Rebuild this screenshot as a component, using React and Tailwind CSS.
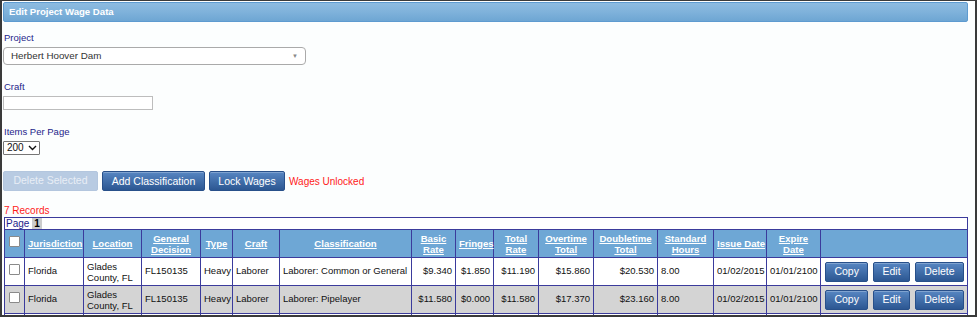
import React from "react";

const columns = [
  { label: ["Jurisdiction"], w: 59 },
  { label: ["Location"], w: 58 },
  { label: ["General", "Decision"], w: 59 },
  { label: ["Type"], w: 32 },
  { label: ["Craft"], w: 47 },
  { label: ["Classification"], w: 132 },
  { label: ["Basic", "Rate"], w: 44 },
  { label: ["Fringes"], w: 38 },
  { label: ["Total", "Rate"], w: 45 },
  { label: ["Overtime", "Total"], w: 55 },
  { label: ["Doubletime", "Total"], w: 64 },
  { label: ["Standard", "Hours"], w: 56 },
  { label: ["Issue Date"], w: 53 },
  { label: ["Expire", "Date"], w: 54 },
];

const rows = [
  {
    jur: "Florida",
    loc: ["Glades", "County, FL"],
    dec: "FL150135",
    type: "Heavy",
    craft: "Laborer",
    cls: "Laborer: Common or General",
    basic: "$9.340",
    fringe: "$1.850",
    total: "$11.190",
    ot: "$15.860",
    dt: "$20.530",
    hours: "8.00",
    issue: "01/02/2015",
    expire: "01/01/2100",
  },
  {
    jur: "Florida",
    loc: ["Glades", "County, FL"],
    dec: "FL150135",
    type: "Heavy",
    craft: "Laborer",
    cls: "Laborer: Pipelayer",
    basic: "$11.580",
    fringe: "$0.000",
    total: "$11.580",
    ot: "$17.370",
    dt: "$23.160",
    hours: "8.00",
    issue: "01/02/2015",
    expire: "01/01/2100",
  },
  {
    jur: "Florida",
    loc: ["Glades", "County, FL"],
    dec: "FL150135",
    type: "Heavy",
    craft: "Laborer",
    cls: "Laborer: Mason Tender",
    basic: "$10.250",
    fringe: "$0.000",
    total: "$10.250",
    ot: "$15.375",
    dt: "$20.500",
    hours: "8.00",
    issue: "01/02/2015",
    expire: "01/01/2100",
  },
];

const btn =
  "h-[20px] rounded-[2px] border border-[#28508a] bg-gradient-to-b from-[#5786c2] to-[#2c5792] text-white text-[10.5px] leading-none shadow-[inset_0_1px_0_rgba(255,255,255,0.25)]";

const Checkbox = () => (
  <span className="inline-block w-[11px] h-[11px] border border-[#8a8a8a] bg-white rounded-[1px]" />
);

const cell = "border border-[#3b3b9c] px-[3px] align-middle whitespace-nowrap";

export default function App() {
  return (
    <div
      className="w-[977px] h-[317px] overflow-hidden bg-[#fcfefe] border-l-2 border-r-2 border-t border-b-2 border-[#3a3a3a] pl-px pr-[7px] text-[9.5px] text-[#111]"
      style={{ fontFamily: '"Liberation Sans", Arial, sans-serif' }}
    >
      {/* Header bar */}
      <div className="mt-px h-[20px] rounded-[2px] border border-[#5e9bd0] bg-gradient-to-b from-[#8dbbe0] via-[#7fb2db] to-[#6ea6d3] flex items-center pl-[5px]">
        <span className="text-white font-bold text-[9.6px]">Edit Project Wage Data</span>
      </div>

      {/* Project */}
      <div className="mt-[10px] h-[12px] leading-[12px] pl-px text-[#1d1d8a]">Project</div>
      <div className="mt-[3px] w-[303px] h-[18px] rounded-[4px] border border-[#aaaaaa] bg-white flex items-center justify-between pl-[7px] pr-[7px] text-[#333]">
        <span className="text-[9.8px]">Herbert Hoover Dam</span>
        <span className="text-[6px] text-[#888]">▼</span>
      </div>

      {/* Craft */}
      <div className="mt-[16px] h-[12px] leading-[12px] pl-px text-[#1d1d8a]">Craft</div>
      <div className="mt-[3px] w-[150px] h-[14px] border border-[#bdbdbd] bg-white" />

      {/* Items per page */}
      <div className="mt-[16px] h-[12px] leading-[12px] pl-px text-[#1d1d8a]">Items Per Page</div>
      <div className="mt-[3px] w-[37px] h-[14px] border border-[#767676] rounded-[1px] bg-white flex items-center justify-between pl-[3px] pr-[2px]">
        <span className="text-[10px] leading-none">200</span>
        <svg width="9" height="6" viewBox="0 0 9 6">
          <path d="M1 1 L4.5 4.5 L8 1" fill="none" stroke="#111" strokeWidth="1.4" />
        </svg>
      </div>

      {/* Actions */}
      <div className="mt-[16px] flex items-center h-[20px]">
        <button className="w-[95px] h-[20px] rounded-[2px] border border-[#b3c6de] bg-[#b8cbe2] text-[#e8eef6] text-[10.5px]">
          Delete Selected
        </button>
        <button className={`${btn} ml-[4px] w-[103px]`}>Add Classification</button>
        <button className={`${btn} ml-[4px] w-[76px]`}>Lock Wages</button>
        <span className="ml-[4px] text-[#ff1a1a] text-[10px]">Wages Unlocked</span>
      </div>

      {/* Records */}
      <div className="mt-[14px] h-[12px] leading-[12px] pl-px text-[#ff1a1a] text-[10px]">7 Records</div>
      <div className="ml-px h-[13px] border border-[#3b3b9c] bg-white flex items-center pl-[1px] text-[#1d1d8a] text-[10px]">
        <span>Page</span>
        <span className="ml-[3px] px-[2px] h-[11px] leading-[11px] bg-[#cccccc] text-black font-bold">1</span>
      </div>

      {/* Table */}
      <table className="ml-px w-[963px] table-fixed border-collapse -mt-px">
        <colgroup>
          <col style={{ width: 20 }} />
          {columns.map((c, i) => (
            <col key={i} style={{ width: c.w }} />
          ))}
          <col style={{ width: 147 }} />
        </colgroup>
        <thead>
          <tr className="h-[28px] bg-[#6ea7d5]">
            <th className={`${cell} px-0 text-center`}>
              <Checkbox />
            </th>
            {columns.map((c, i) => (
              <th
                key={i}
                className={`${cell} px-0 text-center text-white font-bold underline text-[9.6px] leading-[11px]`}
              >
                {c.label.map((l, j) => (
                  <div key={j}>{l}</div>
                ))}
              </th>
            ))}
            <th className={cell}></th>
          </tr>
        </thead>
        <tbody>
          {rows.map((r, i) => (
            <tr key={i} className={`h-[28px] ${i % 2 === 1 ? "bg-[#d4d4d4]" : "bg-white"}`}>
              <td className={`${cell} px-0 text-center`}>
                <Checkbox />
              </td>
              <td className={cell}>{r.jur}</td>
              <td className={`${cell} leading-[11px]`}>
                {r.loc.map((l, j) => (
                  <div key={j}>{l}</div>
                ))}
              </td>
              <td className={cell}>{r.dec}</td>
              <td className={`${cell} px-[1px]`}>{r.type}</td>
              <td className={`${cell} px-[2px]`}>{r.craft}</td>
              <td className={`${cell} px-[3px]`}>{r.cls}</td>
              <td className={`${cell} px-[1px] text-right`}>{r.basic}</td>
              <td className={`${cell} px-[1px] text-right`}>{r.fringe}</td>
              <td className={`${cell} px-[1px] text-right`}>{r.total}</td>
              <td className={`${cell} px-[2px] text-right`}>{r.ot}</td>
              <td className={`${cell} px-[2px] text-right`}>{r.dt}</td>
              <td className={`${cell} px-[2px]`}>{r.hours}</td>
              <td className={`${cell} px-[1px] text-right`}>{r.issue}</td>
              <td className={`${cell} px-[1px] text-right`}>{r.expire}</td>
              <td className={`${cell} px-[2px]`}>
                <div className="flex items-center gap-[5px] pl-px">
                  <button className={`${btn} w-[44px]`}>Copy</button>
                  <button className={`${btn} w-[37px]`}>Edit</button>
                  <button className={`${btn} w-[50px]`}>Delete</button>
                </div>
              </td>
            </tr>
          ))}
        </tbody>
      </table>
    </div>
  );
}
